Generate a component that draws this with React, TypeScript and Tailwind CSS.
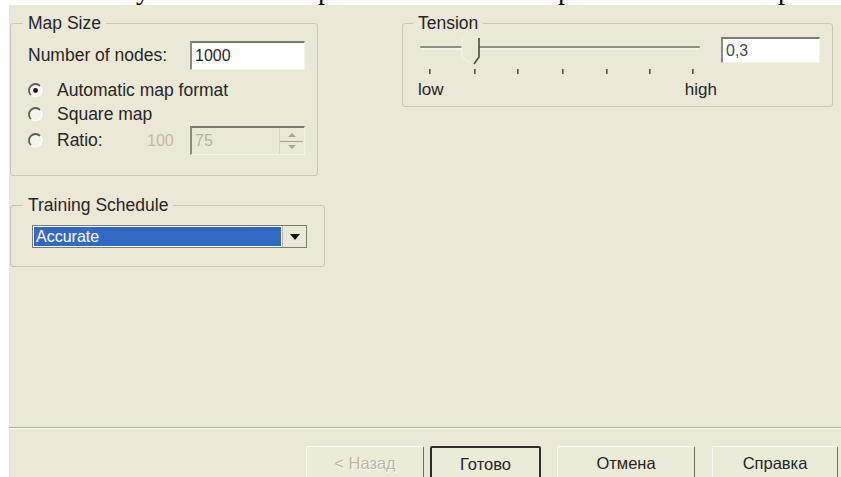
import React from "react";

const ui = "font-['Liberation_Sans',Arial,sans-serif]";

function GroupBox({
  label,
  className,
  legendClass,
  children,
}: {
  label: string;
  className: string;
  legendClass: string;
  children?: React.ReactNode;
}) {
  return (
    <fieldset className={`border border-[#c9c6b5] rounded-[3px] ${className}`}>
      <legend className={`px-[5px] text-[17.5px] leading-[20px] text-[#262626] ${legendClass}`}>{label}</legend>
      {children}
    </fieldset>
  );
}

function Radio({ checked }: { checked?: boolean }) {
  return (
    <svg width="15" height="15" viewBox="0 0 15 15" className="shrink-0">
      <circle cx="7.5" cy="7.5" r="6.5" fill="#f4f3ec" />
      <path d="M12.1 2.9 A6.5 6.5 0 0 0 2.9 12.1" fill="none" stroke="#5e5d58" strokeWidth="1.8" />
      <path d="M2.9 12.1 A6.5 6.5 0 0 0 12.1 2.9" fill="none" stroke="#ffffff" strokeWidth="1.2" />
      {checked && <circle cx="7.5" cy="7.5" r="2.4" fill="#1a1a1a" />}
    </svg>
  );
}

function Sunken({ className, children }: { className: string; children?: React.ReactNode }) {
  return (
    <div
      className={`border-t-2 border-l-2 border-r border-b border-t-[#7a7972] border-l-[#8a8982] border-r-[#f4f3ea] border-b-[#f4f3ea] ${className}`}
    >
      {children}
    </div>
  );
}

function TensionSlider() {
  const ticks = [15, 60, 103, 148, 192, 235, 278];
  return (
    <svg width="290" height="40" viewBox="0 0 290 40" className="block">
      {/* groove */}
      <line x1="7" y1="10" x2="285" y2="10" stroke="#8f8d84" strokeWidth="2" strokeLinecap="round" />
      <line x1="7" y1="12" x2="285" y2="12" stroke="#ffffff" strokeWidth="1" />
      {/* thumb */}
      <rect x="48" y="1" width="17" height="21" fill="#ebe8d7" />
      <path d="M65 1 L65 20 L60 27" fill="none" stroke="#4a4a46" strokeWidth="1.6" />
      <path d="M48 1 L48 20 L57 27" fill="none" stroke="#f7f6ef" strokeWidth="1" />
      {ticks.map((x) => (
        <rect key={x} x={x} y="32" width="1.6" height="5" fill="#55544f" />
      ))}
    </svg>
  );
}

function Button({
  label,
  className,
  disabled,
  isDefault,
}: {
  label: string;
  className: string;
  disabled?: boolean;
  isDefault?: boolean;
}) {
  const frame = isDefault
    ? "border-2 border-[#2e2e2b]"
    : "border border-t-[#fbfaf3] border-l-[#fbfaf3] border-r-[#6d6c66] border-b-[#6d6c66]";
  const text = disabled
    ? "text-[#b9b6a6] [text-shadow:1px_1px_0_#ffffff]"
    : "text-[#262626]";
  return (
    <div
      className={`h-[36px] shrink-0 flex items-start justify-center pt-[6px] bg-[#ecead9] rounded-[2px] text-[16.5px] leading-[20px] ${frame} ${text} ${className}`}
    >
      {label}
    </div>
  );
}

export default function App() {
  return (
    <div className={`w-[841px] h-[477px] overflow-hidden bg-white flex flex-col ${ui}`}>
      {/* tail of the document line above the dialog */}
      <div className="h-[5px] overflow-hidden shrink-0">
        <div className="mt-[-24px] flex font-['Liberation_Serif',serif] text-[28px] leading-[28px] text-black">
          <span className="ml-[136px]">у</span>
          <span className="ml-[168px]">р</span>
          <span className="ml-[226px]">р</span>
          <span className="ml-[206px]">р</span>
        </div>
      </div>

      <div className="flex flex-1 min-h-0">
        <div className="w-[9px] bg-white shrink-0" />
        <div className="flex-1 bg-[#ebe8d7] flex flex-col min-w-0">
          <div className="flex">
            {/* left column */}
            <div className="flex flex-col ml-[1px] w-[315px] shrink-0">
              <GroupBox label="Map Size" className="mt-[8px] w-[308px] h-[163px]" legendClass="ml-[12px]">
                <div className="flex items-center mt-[8px] h-[29px] pl-[17px]">
                  <span className="w-[162px] text-[17.5px] text-[#262626]">Number of nodes:</span>
                  <Sunken className="w-[115px] h-[29px] bg-white flex items-center pl-[3px]">
                    <span className="text-[16px] text-[#262626]">1000</span>
                  </Sunken>
                </div>
                <div className="flex items-center mt-[8px] h-[25px] pl-[17px] gap-[14px]">
                  <Radio checked />
                  <span className="text-[17.5px] text-[#262626]">Automatic map format</span>
                </div>
                <div className="flex items-center h-[23px] pl-[17px] gap-[14px]">
                  <Radio />
                  <span className="text-[17.5px] text-[#262626]">Square map</span>
                </div>
                <div className="flex items-center h-[29px] pl-[17px]">
                  <Radio />
                  <span className="ml-[14px] w-[90px] text-[17.5px] text-[#262626]">Ratio:</span>
                  <span className="w-[43px] text-[16px] text-[#bdbaa9]">100</span>
                  <Sunken className="w-[115px] h-[29px] bg-[#ebe8d7] flex items-center pl-[3px]">
                    <span className="flex-1 text-[16px] text-[#b3b0a0]">75</span>
                    <div className="w-[24px] h-full flex flex-col border-l border-[#d8d5c4] mr-[1px]">
                      <div className="flex-1 flex items-center justify-center border-b border-[#a5a393]">
                        <svg width="8" height="5" viewBox="0 0 8 5">
                          <path d="M0 5 L4 1 L8 5 Z" fill="#a9a696" />
                        </svg>
                      </div>
                      <div className="flex-1 flex items-center justify-center">
                        <svg width="8" height="5" viewBox="0 0 8 5">
                          <path d="M0 0 L4 4 L8 0 Z" fill="#a9a696" />
                        </svg>
                      </div>
                    </div>
                  </Sunken>
                </div>
              </GroupBox>

              <GroupBox label="Training Schedule" className="mt-[19px] w-[315px] h-[72px]" legendClass="ml-[12px]">
                <div className="mt-[10px] ml-[21px] w-[275px] h-[23px] border border-[#7d7c75] bg-white flex items-stretch">
                  <div className="flex-1 m-[1px] bg-[#316ac5] flex items-center pl-[2px]">
                    <span className="text-[16px] text-white leading-none">Accurate</span>
                  </div>
                  <div className="w-[24px] bg-[#ebe8d7] border-l border-[#b9b7a8] flex items-center justify-center">
                    <svg width="10" height="6" viewBox="0 0 10 6">
                      <path d="M0 0 L10 0 L5 6 Z" fill="#111" />
                    </svg>
                  </div>
                </div>
              </GroupBox>
            </div>

            {/* right column */}
            <GroupBox label="Tension" className="mt-[8px] ml-[77px] w-[431px] h-[94px]" legendClass="ml-[10px]">
              <div className="flex mt-[4px]">
                <div className="ml-[11px] w-[290px] flex flex-col">
                  <TensionSlider />
                  <div className="flex justify-between text-[17px] leading-[20px] text-[#262626] mt-[3px] pl-[4px] w-[303px]">
                    <span>low</span>
                    <span>high</span>
                  </div>
                </div>
                <Sunken className="ml-[17px] w-[99px] h-[26px] bg-white flex items-center pl-[3px]">
                  <span className="text-[16px] text-[#4a4a46]">0,3</span>
                </Sunken>
              </div>
            </GroupBox>
          </div>

          <div className="flex-1" />

          {/* bottom separator and wizard buttons */}
          <div className="h-[1px] bg-[#b3b09f]" />
          <div className="h-[1px] bg-[#fbfaf2]" />
          <div className="flex mt-[17px] h-[31px]">
            <Button label="< Назад" disabled className="ml-[297px] w-[118px]" />
            <Button label="Готово" isDefault className="ml-[6px] w-[111px]" />
            <Button label="Отмена" className="ml-[16px] w-[138px]" />
            <Button label="Справка" className="ml-[17px] w-[126px]" />
          </div>
        </div>
      </div>
    </div>
  );
}
